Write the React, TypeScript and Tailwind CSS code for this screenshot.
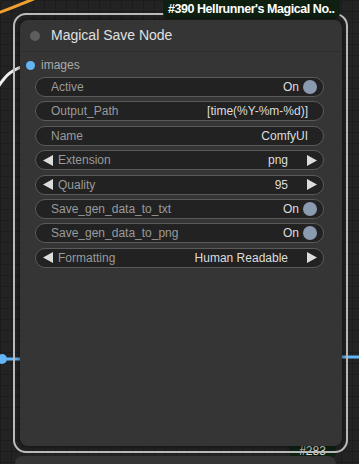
import React from "react";

type Row =
  | {kind: "toggle"; label: string; value: string}
  | {kind: "text"; label: string; value: string}
  | {kind: "combo"; label: string; value: string};

const rows: Row[] = [
  {kind: "toggle", label: "Active", value: "On"},
  {kind: "text", label: "Output_Path", value: "[time(%Y-%m-%d)]"},
  {kind: "text", label: "Name", value: "ComfyUI"},
  {kind: "combo", label: "Extension", value: "png"},
  {kind: "combo", label: "Quality", value: "95"},
  {kind: "toggle", label: "Save_gen_data_to_txt", value: "On"},
  {kind: "toggle", label: "Save_gen_data_to_png", value: "On"},
  {kind: "combo", label: "Formatting", value: "Human Readable"},
];

const ArrowLeft = () => (
  <svg width="10" height="11" viewBox="0 0 10 11" className="shrink-0">
    <polygon points="10,0 10,11 0,5.5" fill="#dddddd" />
  </svg>
);

const ArrowRight = () => (
  <svg width="10" height="11" viewBox="0 0 10 11" className="shrink-0">
    <polygon points="0,0 0,11 10,5.5" fill="#dddddd" />
  </svg>
);

const Widget = ({row}: {row: Row}) => {
  if (row.kind === "combo") {
    return (
      <div className="flex h-[20px] w-[289px] items-center rounded-full border border-[#5a5a5a] bg-[#222222] pl-[7px] pr-[6px]">
        <ArrowLeft />
        <span className="ml-[5px] text-[#9a9a9a]">{row.label}</span>
        <span className="ml-auto text-[#dddddd]">{row.value}</span>
        <span className="ml-[19px]">
          <ArrowRight />
        </span>
      </div>
    );
  }
  if (row.kind === "toggle") {
    return (
      <div className="flex h-[20px] w-[289px] items-center rounded-full border border-[#5a5a5a] bg-[#222222] pl-[15px] pr-[6px]">
        <span className="text-[#9a9a9a]">{row.label}</span>
        <span className="ml-auto text-[#dddddd]">{row.value}</span>
        <span className="ml-[4px] h-[14px] w-[14px] rounded-full bg-[#8a9bb0]" />
      </div>
    );
  }
  return (
    <div className="flex h-[20px] w-[289px] items-center rounded-full border border-[#5a5a5a] bg-[#222222] pl-[15px] pr-[15px]">
      <span className="text-[#9a9a9a]">{row.label}</span>
      <span className="ml-auto text-[#dddddd]">{row.value}</span>
    </div>
  );
};

export default function App() {
  return (
    <div
      className="relative h-[464px] w-[359px] overflow-hidden bg-[#232323] bg-[linear-gradient(#1c1c1c_1px,transparent_1px),linear-gradient(90deg,#1c1c1c_1px,transparent_1px)] bg-[size:11px_11px]"
      style={{fontFamily: '"Liberation Sans", Arial, sans-serif'}}
    >
      {/* wires */}
      <svg className="absolute inset-0" width="359" height="464">
        <path d="M -2 13 C 12 8, 24 3, 36 -2" stroke="#f0a030" strokeWidth="3" fill="none" />
        <path d="M -4 90 C 4 78, 10 68, 30 65" stroke="#eeeeee" strokeWidth="3" fill="none" />
        <line x1="0" y1="359" x2="22" y2="359" stroke="#64b5f6" strokeWidth="3" />
        <circle cx="2" cy="359" r="5" fill="#64b5f6" />
        <line x1="340" y1="357" x2="359" y2="357" stroke="#64b5f6" strokeWidth="3" />
      </svg>

      {/* badge of node below */}
      <div className="absolute left-[289px] top-[441px] flex h-[17px] w-[47px] items-end justify-center rounded-[6px] bg-[#0e2212] pb-[1px] text-[12px] leading-none text-[#dddddd]">
        #283
      </div>

      {/* node below */}
      <div className="absolute left-[15px] top-[456px] h-[40px] w-[321px] rounded-[8px] bg-[#353535]" />

      {/* selection ring */}
      <div className="absolute left-[13px] top-[13px] h-[440px] w-[335px] rounded-[13px] border-2 border-[#bdbdbd]" />

      {/* badge */}
      <div className="absolute left-[163px] top-[-6px] flex h-[25px] w-[177px] items-end overflow-hidden whitespace-nowrap rounded-[6px] bg-[#0f1f10] pb-[4px] pl-[5px] text-[12.5px] font-bold leading-none text-white">
        <span className="tracking-[-0.45px]">#390 Hellrunner's Magical No..</span>
      </div>

      {/* node */}
      <div className="absolute left-[20px] top-[20px] flex h-[426px] w-[322px] flex-col rounded-[8px] bg-[#353535] shadow-[0_0_6px_rgba(0,0,0,0.6)]">
        <div className="flex h-[32px] shrink-0 items-center border-b border-[#2e2e2e] pl-[10px]">
          <span className="h-[10px] w-[10px] rounded-full bg-[#5e5e5e]" />
          <span className="ml-[11px] text-[14px] text-[#e0e0e0]">Magical Save Node</span>
        </div>
        <div className="mt-[3px] flex h-[20px] items-center pl-[6px]">
          <span className="h-[9px] w-[9px] rounded-full bg-[#64b5f6]" />
          <span className="ml-[6px] text-[12px] text-[#aaaaaa]">images</span>
        </div>
        <div className="ml-[15px] mt-[2px] flex flex-col gap-[4.4px] text-[12px]">
          {rows.map((row) => (
            <Widget key={row.label} row={row} />
          ))}
        </div>
      </div>
    </div>
  );
}
